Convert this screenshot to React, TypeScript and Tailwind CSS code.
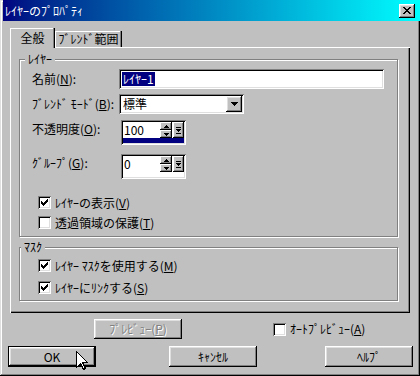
import React from "react";

const raised =
  "shadow-[inset_-1px_-1px_#000,inset_1px_1px_#fff,inset_-2px_-2px_#808080,inset_2px_2px_#dfdfdf]";
const sunken =
  "shadow-[inset_1px_1px_#808080,inset_-1px_-1px_#fff,inset_2px_2px_#000,inset_-2px_-2px_#dfdfdf]";
const smallRaised = "shadow-[inset_-1px_-1px_#000,inset_1px_1px_#fff,inset_-2px_-2px_#808080]";

function Check({ checked }: { checked: boolean }) {
  return (
    <div className={`w-[13px] h-[13px] bg-white shrink-0 ${sunken}`}>
      {checked && (
        <svg width="13" height="13" viewBox="0 0 13 13" shapeRendering="crispEdges">
          <path
            d="M9 3h1v1h-1z M8 4h2v1h-2z M3 5h1v1h-1z M7 5h3v1h-3z M3 6h2v1h-2z M6 6h3v1h-3z M3 7h5v1h-5z M4 8h3v1h-3z M5 9h1v1h-1z"
            fill="#000"
          />
        </svg>
      )}
    </div>
  );
}

function M({ c }: { c: string }) {
  return <u className="underline underline-offset-[1px]">{c}</u>;
}

function CheckRow({ checked, children, mt }: { checked: boolean; children: React.ReactNode; mt: string }) {
  return (
    <div className={`flex items-center h-[13px] ml-[6px] ${mt}`}>
      <Check checked={checked} />
      <span className="ml-[4px] whitespace-nowrap">{children}</span>
    </div>
  );
}

function Spin({ value, bar }: { value: string; bar: boolean }) {
  return (
    <div className={`ml-[2px] w-[65px] h-[25px] p-[2px] bg-[#c0c0c0] flex flex-col ${sunken}`}>
      <div className="flex h-[16px] bg-white">
        <div className="w-[37px] h-[16px] bg-white leading-[16px] pl-[1px]">{value}</div>
        <div className="w-[12px] flex flex-col">
          <div className={`h-[8px] bg-[#c0c0c0] flex items-center justify-center ${smallRaised}`}>
            <svg width="5" height="3" viewBox="0 0 5 3" shapeRendering="crispEdges">
              <path d="M2 0h1v1h-1z M1 1h3v1h-3z M0 2h5v1h-5z" fill="#000" />
            </svg>
          </div>
          <div className={`h-[8px] bg-[#c0c0c0] flex items-center justify-center ${smallRaised}`}>
            <svg width="5" height="3" viewBox="0 0 5 3" shapeRendering="crispEdges">
              <path d="M0 0h5v1h-5z M1 1h3v1h-3z M2 2h1v1h-1z" fill="#000" />
            </svg>
          </div>
        </div>
        <div className="w-[1px] bg-white" />
        <div className={`w-[11px] h-[16px] bg-[#c0c0c0] flex items-center justify-center ${smallRaised}`}>
          <svg width="5" height="7" viewBox="0 0 5 7" shapeRendering="crispEdges">
            <path d="M0 0h5v1h-5z M0 2h5v1h-5z M1 3h3v1h-3z M2 4h1v1h-1z M0 6h5v1h-5z" fill="#000" />
          </svg>
        </div>
      </div>
      <div className={`h-[5px] ${bar ? "bg-[#000080]" : "bg-white"}`} />
    </div>
  );
}

function Button({
  children,
  w,
  ml,
  def,
  disabled,
}: {
  children: React.ReactNode;
  w: string;
  ml: string;
  def?: boolean;
  disabled?: boolean;
}) {
  if (def) {
    return (
      <div className={`${w} ${ml} h-[21px] border border-black flex`}>
        <div className={`flex-1 flex items-center justify-center bg-[#c0c0c0] ${raised}`}>{children}</div>
      </div>
    );
  }
  return (
    <div
      className={`${w} ${ml} h-[21px] flex items-center justify-center bg-[#c0c0c0] ${raised} ${
        disabled ? "text-[#808080] [text-shadow:1px_1px_#fff]" : ""
      }`}
    >
      {children}
    </div>
  );
}

export default function App() {
  return (
    <div
      className={`relative w-[420px] h-[376px] bg-[#c0c0c0] overflow-hidden flex flex-col text-[12px] leading-[14px] text-black font-['Noto_Sans_CJK_JP','Noto_Sans',sans-serif] shadow-[inset_-1px_-1px_#000,inset_1px_1px_#dfdfdf,inset_-2px_-2px_#808080,inset_2px_2px_#fff]`}
    >
      {/* Title bar */}
      <div className="ml-[3px] h-[21px] shrink-0 flex items-center bg-linear-to-r from-[#000080] to-[#00ffff]">
        <span className="pl-[2px] text-white whitespace-nowrap">ﾚｲﾔｰのﾌﾟﾛﾊﾟﾃｨ</span>
        <div className={`ml-auto mr-[5px] w-[16px] h-[14px] bg-[#c0c0c0] flex items-center justify-center ${raised}`}>
          <svg width="8" height="7" viewBox="0 0 8 7" shapeRendering="crispEdges">
            <path
              d="M0 0h2v1h-2z M6 0h2v1h-2z M1 1h2v1h-2z M5 1h2v1h-2z M2 2h4v1h-4z M3 3h2v1h-2z M2 4h4v1h-4z M1 5h2v1h-2z M5 5h2v1h-2z M0 6h2v1h-2z M6 6h2v1h-2z"
              fill="#000"
            />
          </svg>
        </div>
      </div>

      {/* Tabs */}
      <div className="mt-[7px] ml-[10px] h-[19px] shrink-0 flex items-end">
        <div className="relative z-10 w-[45px] h-[20px] mb-[-1px] bg-[#c0c0c0] flex items-center justify-center pb-[1px] shadow-[inset_-1px_0_#000,inset_-2px_0_#808080,inset_1px_1px_#fff]">
          全般
        </div>
        <div className="w-[67px] h-[16px] bg-[#c0c0c0] flex items-center justify-center shadow-[inset_-1px_0_#000,inset_-2px_0_#808080,inset_1px_1px_#fff]">
          ﾌﾞﾚﾝﾄﾞ範囲
        </div>
      </div>

      {/* Panel */}
      <div className="ml-[10px] w-[400px] h-[266px] shrink-0 flex flex-col pt-[12px] pl-[9px] shadow-[inset_1px_1px_#fff,inset_-1px_-1px_#000,inset_-2px_-2px_#808080]">
        {/* Layer group */}
        <div className="relative w-[379px] h-[178px] border border-[#808080] shadow-[inset_1px_1px_#fff,1px_1px_#fff] flex flex-col pl-[12px]">
          <span className="absolute top-[-8px] left-[5px] px-[3px] bg-[#c0c0c0]">ﾚｲﾔｰ</span>

          <div className="mt-[9px] h-[20px] flex items-center">
            <span className="w-[87px] whitespace-nowrap">
              名前(<M c="N" />):
            </span>
            <div className={`w-[265px] h-[20px] bg-white flex items-center pl-[3px] ${sunken}`}>
              <span className="bg-[#000080] text-white px-[1px]">ﾚｲﾔｰ1</span>
            </div>
          </div>

          <div className="mt-[5px] h-[20px] flex items-center">
            <span className="w-[87px] whitespace-nowrap">
              ﾌﾞﾚﾝﾄﾞ ﾓｰﾄﾞ(<M c="B" />):
            </span>
            <div className={`w-[125px] h-[20px] bg-white flex items-center p-[2px] ${sunken}`}>
              <span className="flex-1 pl-[2px]">標準</span>
              <div className={`w-[16px] h-[16px] bg-[#c0c0c0] flex items-center justify-center ${raised}`}>
                <svg width="7" height="4" viewBox="0 0 7 4" shapeRendering="crispEdges">
                  <path d="M0 0h7v1h-7z M1 1h5v1h-5z M2 2h3v1h-3z M3 3h1v1h-1z" fill="#000" />
                </svg>
              </div>
            </div>
          </div>

          <div className="mt-[6px] h-[25px] flex items-start">
            <span className="w-[87px] mt-[2px] whitespace-nowrap">
              不透明度(<M c="O" />):
            </span>
            <Spin value="100" bar />
          </div>

          <div className="mt-[9px] h-[25px] flex items-start">
            <span className="w-[87px] mt-[2px] whitespace-nowrap">
              ｸﾞﾙｰﾌﾟ(<M c="G" />):
            </span>
            <Spin value="0" bar={false} />
          </div>

          <CheckRow checked mt="mt-[17px]">
            ﾚｲﾔｰの表示(<M c="V" />)
          </CheckRow>
          <CheckRow checked={false} mt="mt-[7px]">
            透過領域の保護(<M c="T" />)
          </CheckRow>
        </div>

        {/* Mask group */}
        <div className="relative mt-[10px] w-[379px] h-[54px] border border-[#808080] shadow-[inset_1px_1px_#fff,1px_1px_#fff] flex flex-col pl-[12px]">
          <span className="absolute top-[-8px] left-[1px] px-[3px] bg-[#c0c0c0]">ﾏｽｸ</span>
          <CheckRow checked mt="mt-[11px]">
            ﾚｲﾔｰ ﾏｽｸを使用する(<M c="M" />)
          </CheckRow>
          <CheckRow checked mt="mt-[9px]">
            ﾚｲﾔｰにﾘﾝｸする(<M c="S" />)
          </CheckRow>
        </div>
      </div>

      {/* Preview row */}
      <div className="mt-[6px] h-[20px] shrink-0 flex items-center">
        <div
          className={`ml-[94px] w-[88px] h-[20px] flex items-center justify-center bg-[#c0c0c0] text-[#808080] [text-shadow:1px_1px_#fff] ${raised}`}
        >
          ﾌﾟﾚﾋﾞｭｰ(<M c="P" />)
        </div>
        <div className="ml-[91px] flex items-center">
          <Check checked={false} />
          <span className="ml-[4px] whitespace-nowrap">
            ｵｰﾄﾌﾟﾚﾋﾞｭｰ(<M c="A" />)
          </span>
        </div>
      </div>

      {/* Buttons */}
      <div className="mt-[7px] h-[21px] shrink-0 flex items-center">
        <Button w="w-[88px]" ml="ml-[8px]" def>
          OK
        </Button>
        <Button w="w-[88px]" ml="ml-[73px]">
          ｷｬﾝｾﾙ
        </Button>
        <Button w="w-[88px]" ml="ml-[68px]">
          ﾍﾙﾌﾟ
        </Button>
      </div>

      {/* Mouse cursor */}
      <svg
        className="absolute left-[76px] top-[351px]"
        width="13"
        height="20"
        viewBox="0 0 13 20"
        shapeRendering="crispEdges"
      >
        <path d="M0.5 0.5 L0.5 16.5 L4.5 12.5 L7.5 18.5 L9.5 17.5 L6.5 11.5 L11.5 11.5 Z" fill="#fff" stroke="#000" strokeWidth="1" />
      </svg>
    </div>
  );
}
